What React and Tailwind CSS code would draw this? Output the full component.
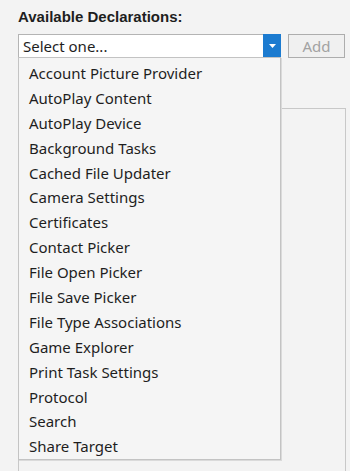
import React from 'react';

const declarations = [
  'Account Picture Provider',
  'AutoPlay Content',
  'AutoPlay Device',
  'Background Tasks',
  'Cached File Updater',
  'Camera Settings',
  'Certificates',
  'Contact Picker',
  'File Open Picker',
  'File Save Picker',
  'File Type Associations',
  'Game Explorer',
  'Print Task Settings',
  'Protocol',
  'Search',
  'Share Target',
];

export default function App() {
  return (
    <div
      className="w-[350px] h-[471px] overflow-hidden bg-[#f3f3f3] text-[#1e1e1e] pl-[18px] pt-[8px]"
      style={{ fontFamily: '"Noto Sans", "Open Sans", sans-serif' }}
    >
      <div
        className="text-[15px] font-bold leading-[17px] text-[#1e1e1e]"
        style={{ fontFamily: '"Liberation Sans", Arial, sans-serif' }}
      >
        Available Declarations:
      </div>

      <div className="flex items-start mt-[9px]">
        <div className="relative w-[263px]">
          {/* combo box */}
          <div className="flex h-[24px] bg-white border border-[#b4b4b4]">
            <div className="flex-1 pl-[4px] text-[15px] leading-[22px] text-[#1e1e1e]">Select one...</div>
            <div className="w-[18px] -mt-px -mr-px h-[24px] bg-[#1c7bd0] flex items-center justify-center">
              <svg width="7" height="4" viewBox="0 0 7 4">
                <path d="M0 0h7L3.5 4z" fill="#fff" />
              </svg>
            </div>
          </div>

          {/* background panel */}
          <div className="mt-[50px] w-[328px] h-[400px] border border-[#c8c8c8]" />

          {/* open list */}
          <div className="absolute left-0 top-[23px] w-[263px] bg-[#f5f5f5] border border-[#c3c3c3] shadow-[1px_1px_0_#dadada] pt-[3px]">
            {declarations.map((d) => (
              <div key={d} className="h-[24.9px] pl-[10px] text-[15px] leading-[24.9px] text-[#1e1e1e] whitespace-nowrap">
                {d}
              </div>
            ))}
          </div>
        </div>

        <button className="ml-[7px] w-[57px] h-[24px] border border-[#adadad] bg-[#f0f0f0] text-[15px] leading-[20px] text-[#a2a2a2]">
          Add
        </button>
      </div>
    </div>
  );
}
